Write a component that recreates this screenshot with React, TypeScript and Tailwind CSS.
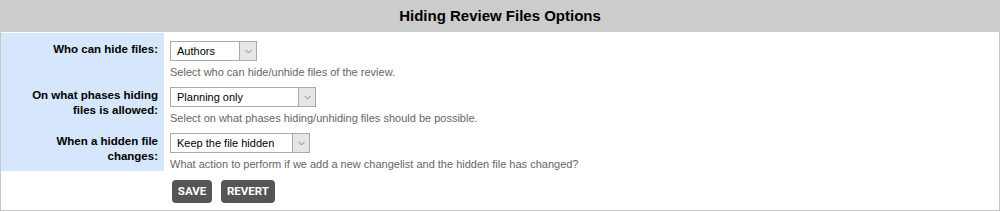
import { ChevronDown } from "lucide-react";

type Row = {
  label: string[];
  value: string;
  width: string;
  help: string;
};

const rows: Row[] = [
  {
    label: ["Who can hide files:"],
    value: "Authors",
    width: "w-[87px]",
    help: "Select who can hide/unhide files of the review.",
  },
  {
    label: ["On what phases hiding", "files is allowed:"],
    value: "Planning only",
    width: "w-[146px]",
    help: "Select on what phases hiding/unhiding files should be possible.",
  },
  {
    label: ["When a hidden file", "changes:"],
    value: "Keep the file hidden",
    width: "w-[140px]",
    help: "What action to perform if we add a new changelist and the hidden file has changed?",
  },
];

function FakeSelect({ value, width }: { value: string; width: string }) {
  return (
    <div className={`flex h-[20px] ${width} items-stretch border border-[#a9a9a9] bg-white`}>
      <span className="flex-1 truncate pl-[6px] text-[11px] leading-[18px] text-black">{value}</span>
      <span className="flex w-[17px] items-center justify-center border-l border-[#a9a9a9] bg-[#e6e6e6] text-[#555]">
        <ChevronDown size={11} strokeWidth={1.5} />
      </span>
    </div>
  );
}

export default function App() {
  return (
    <div className="h-[212px] w-[1000px] bg-white font-['Liberation_Sans',Arial,sans-serif]">
      <div className="h-[211px] border-x border-b border-[#c8c8c8]">
        <div className="flex h-[32px] items-center justify-center bg-[#cccccc] text-[15px] font-bold text-black">
          Hiding Review Files Options
        </div>
        <div className="mt-[1px]">
          {rows.map((row) => (
            <div key={row.value} className="flex h-[46px]">
              <div className="w-[163px] shrink-0 bg-[#d5e6fd] pr-[6px] pt-[9px] text-right text-[11.5px] font-bold leading-[15px] text-black">
                {row.label.map((line) => (
                  <div key={line}>{line}</div>
                ))}
              </div>
              <div className="flex flex-col pl-[6px] pt-[8px]">
                <FakeSelect value={row.value} width={row.width} />
                <p className="mt-[4px] text-[11px] leading-[14px] text-[#666]">{row.help}</p>
              </div>
            </div>
          ))}
          <div className="flex">
            <div className="h-[0px] w-[163px] shrink-0 bg-[#d5e6fd]" />
            <div className="flex gap-[9px] pl-[8px] pt-[9px] font-['Roboto',sans-serif] text-[11.5px] font-bold text-white">
              <button className="h-[23px] w-[40px] rounded-[4px] bg-[#555]">SAVE</button>
              <button className="h-[23px] w-[54px] rounded-[4px] bg-[#555]">REVERT</button>
            </div>
          </div>
        </div>
      </div>
    </div>
  );
}
